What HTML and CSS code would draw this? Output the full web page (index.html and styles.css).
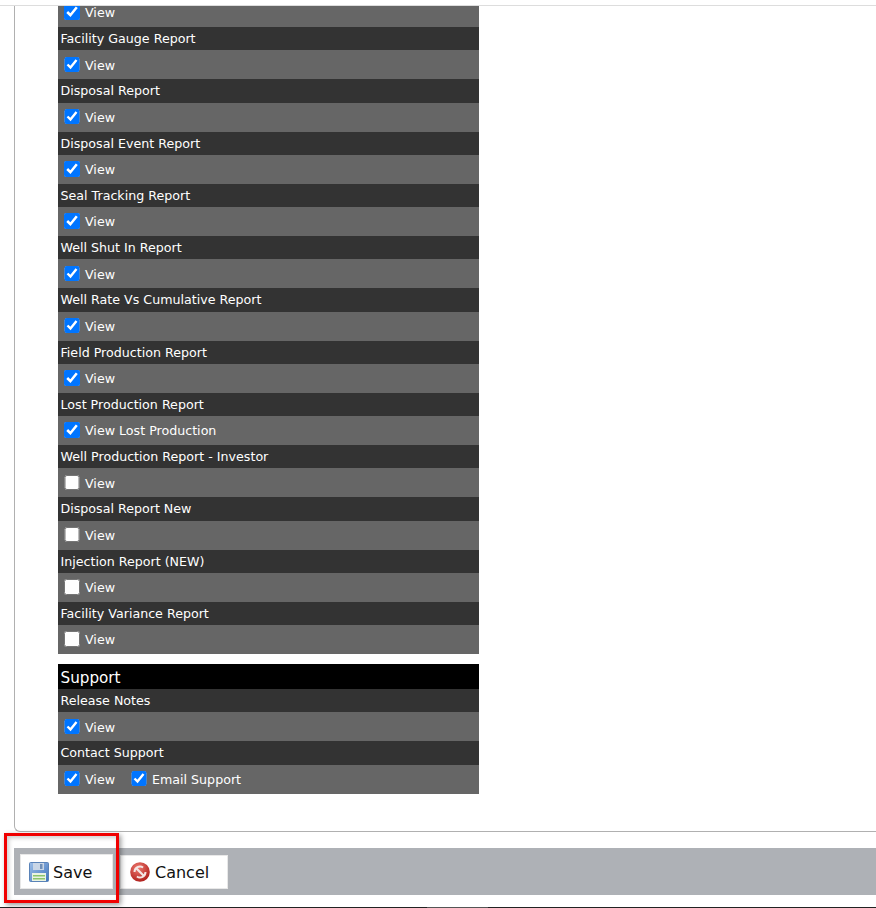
FILE: index.html
```html
<!DOCTYPE html>
<html lang="en">
<head>
<meta charset="utf-8">
<title>Permissions</title>
<link rel="stylesheet" href="styles.css">
</head>
<body>
<div class="viewport">
  <div class="top-rule"></div>
  <div class="panel">
    <div class="scroll-content">
    <section class="group">
      <div class="row"><label class="opt"><input type="checkbox" checked><span>View</span></label></div>
      <div class="head">Facility Gauge Report</div>
      <div class="row"><label class="opt"><input type="checkbox" checked><span>View</span></label></div>
      <div class="head">Disposal Report</div>
      <div class="row"><label class="opt"><input type="checkbox" checked><span>View</span></label></div>
      <div class="head">Disposal Event Report</div>
      <div class="row"><label class="opt"><input type="checkbox" checked><span>View</span></label></div>
      <div class="head">Seal Tracking Report</div>
      <div class="row"><label class="opt"><input type="checkbox" checked><span>View</span></label></div>
      <div class="head">Well Shut In Report</div>
      <div class="row"><label class="opt"><input type="checkbox" checked><span>View</span></label></div>
      <div class="head">Well Rate Vs Cumulative Report</div>
      <div class="row"><label class="opt"><input type="checkbox" checked><span>View</span></label></div>
      <div class="head">Field Production Report</div>
      <div class="row"><label class="opt"><input type="checkbox" checked><span>View</span></label></div>
      <div class="head">Lost Production Report</div>
      <div class="row"><label class="opt"><input type="checkbox" checked><span>View Lost Production</span></label></div>
      <div class="head">Well Production Report - Investor</div>
      <div class="row"><label class="opt"><input type="checkbox"><span>View</span></label></div>
      <div class="head">Disposal Report New</div>
      <div class="row"><label class="opt"><input type="checkbox"><span>View</span></label></div>
      <div class="head">Injection Report (NEW)</div>
      <div class="row"><label class="opt"><input type="checkbox"><span>View</span></label></div>
      <div class="head">Facility Variance Report</div>
      <div class="row"><label class="opt"><input type="checkbox"><span>View</span></label></div>
    </section>
    <section class="group">
      <div class="title">Support</div>
      <div class="head">Release Notes</div>
      <div class="row"><label class="opt"><input type="checkbox" checked><span>View</span></label></div>
      <div class="head">Contact Support</div>
      <div class="row"><label class="opt"><input type="checkbox" checked><span>View</span></label><label class="opt"><input type="checkbox" checked><span>Email Support</span></label></div>
    </section>
    </div>
  </div>
  <div class="toolbar">
    <div class="highlight"></div>
    <button class="btn save" type="button">
      <svg width="20" height="20" viewBox="0 0 20 20" aria-hidden="true"><defs><linearGradient id="disk" x1="0" y1="0" x2="1" y2="1"><stop offset="0" stop-color="#9dbfe8"/><stop offset="1" stop-color="#3f74bd"/></linearGradient></defs><rect x="0.5" y="0.5" width="19" height="19" rx="1" fill="url(#disk)" stroke="#5a83b8"/><rect x="4" y="1" width="11" height="7" fill="#c9d6e6"/><rect x="11" y="2" width="2.5" height="5" fill="#6f8fb8"/><rect x="3" y="11" width="14" height="8" fill="#eaf3e2"/><rect x="4" y="13" width="12" height="1.5" fill="#8cc56c"/><rect x="4" y="16" width="12" height="1.5" fill="#8cc56c"/></svg>
      <span>Save</span>
    </button>
    <button class="btn cancel" type="button">
      <svg width="20" height="20" viewBox="0 0 20 20" aria-hidden="true"><defs><radialGradient id="stop" cx="0.4" cy="0.3" r="0.8"><stop offset="0" stop-color="#ee7a70"/><stop offset="1" stop-color="#a81512"/></radialGradient></defs><circle cx="10" cy="10" r="9.8" fill="url(#stop)"/><path d="M4.5 10a5.5 5.5 0 0 1 8.6-4.5M15.5 10a5.5 5.5 0 0 1-8.6 4.5" fill="none" stroke="#f4e6e4" stroke-width="2"/><path d="M6.5 6.5 13.5 13.5" stroke="#f4e6e4" stroke-width="2.2"/></svg>
      <span>Cancel</span>
    </button>
  </div>
  <div class="foot"><div class="foot-segment"></div></div>
</div>
</body>
</html>
```
FILE: styles.css
```css
html, body { margin: 0; padding: 0; background: #fff; }
body { font-family: "DejaVu Sans", Verdana, sans-serif; font-size: 12.65px; color: #fff; }
.viewport { width: 876px; height: 908px; overflow: hidden; display: flex; flex-direction: column; }
.top-rule { height: 6px; flex: none; box-sizing: border-box; border-bottom: 1px solid #ddd; }
.panel { flex: none; margin-left: 14px; height: 826px; overflow: hidden; box-sizing: border-box; border-left: 1px solid #b0b0b0; border-bottom: 1px solid #b0b0b0; border-bottom-left-radius: 6px; padding-left: 43px; }
.scroll-content { margin-top: -8px; }
.group { width: 421px; margin-bottom: 10px; }
.title { background: #000; height: 25px; line-height: 28px; font-size: 15.2px; padding-left: 2.5px; }
.head { background: #333; height: 23.25px; line-height: 24.75px; padding-left: 2.5px; }
.row { background: #666; height: 29px; display: flex; align-items: center; padding-left: 6px; gap: 16px; }
.opt { display: flex; align-items: center; gap: 5.5px; }
.opt span { padding-top: 0.6px; }
.opt input { width: 15.5px; height: 15.5px; margin: 0 0 0.6px; accent-color: #0075ff; }
.toolbar { position: relative; flex: none; margin: 16px 0 0 14px; height: 47px; background: #aeb1b6; display: flex; align-items: center; padding-left: 6px; gap: 7px; }
.highlight { position: absolute; z-index: 1; left: -10px; top: -15px; width: 109px; height: 64px; border: 3px solid #f00000; box-shadow: 2px 2px 5px rgba(0,0,0,.4), inset 2px 2px 4px rgba(0,0,0,.2); pointer-events: none; }
.btn { display: flex; align-items: center; gap: 4px; height: 35px; border: 1px solid #e8e8e8; background: #fff; padding: 0 8px; font-family: "DejaVu Sans", Verdana, sans-serif; font-size: 16px; color: #111; }
.btn span { padding-top: 2px; }
.save { width: 93px; }
.cancel { width: 108px; height: 34px; margin-top: 1px; padding-left: 9px; gap: 5px; }
.cancel span { padding-top: 0; }
.foot { flex: none; margin-top: 12px; height: 1px; background: #222; }
.foot-segment { margin-left: 427px; width: 61px; height: 1px; background: #555; }
```
